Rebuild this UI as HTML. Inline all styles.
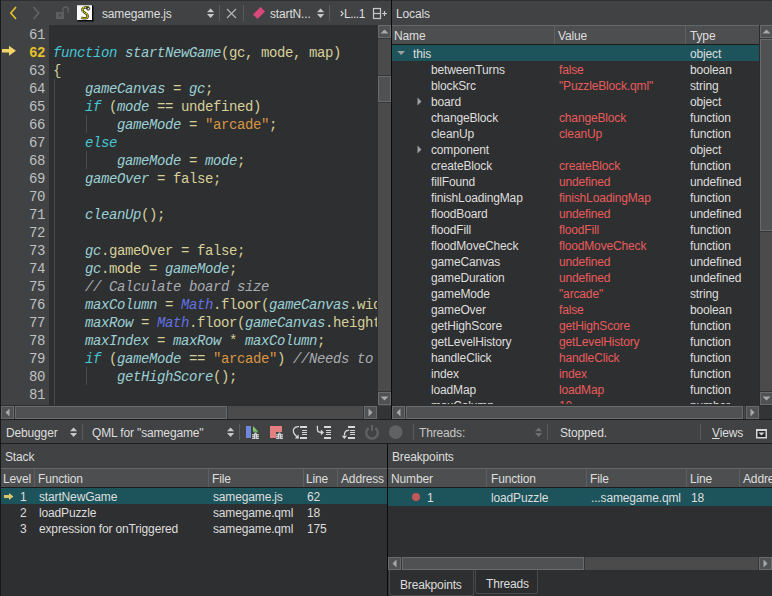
<!DOCTYPE html><html><head><meta charset="utf-8"><style>
*{margin:0;padding:0;box-sizing:border-box}
html,body{width:772px;height:596px;overflow:hidden;background:#404244;font-family:"Liberation Sans",sans-serif;font-size:12px;color:#d4d4d4}
.a{position:absolute}
.mono{font-family:"Liberation Mono",monospace;font-size:14px;letter-spacing:-0.4015px}
.tx{position:absolute;white-space:pre;line-height:16px;height:17px;padding-top:1px;letter-spacing:-0.15px}
.ln{position:absolute;left:53px;height:18px;line-height:18px;white-space:pre;color:#d6cf9a}
.n{position:absolute;left:1px;width:44px;height:18px;line-height:18px;text-align:right;color:#bec0c1}
.kw{color:#45c6d6;font-style:italic}
.id{color:#9acfd5;font-style:italic}
.st{color:#d69545}
.ty{color:#6272e4;font-style:italic}
.cm{color:#a8abb0;font-style:italic}
.red{color:#e05a5a}
</style></head><body>
<div class="a" style="left:0px;top:0px;width:772px;height:1px;background:#2f3031;"></div>
<div class="a" style="left:49px;top:25px;width:329px;height:381px;background:#2e2f30;"></div>
<div class="a" style="left:54px;top:79px;width:1px;height:327px;background:#4a4b4c;"></div>
<div class="a" style="left:86px;top:115px;width:1px;height:18px;background:#4a4b4c;"></div>
<div class="a" style="left:86px;top:151px;width:1px;height:18px;background:#4a4b4c;"></div>
<div class="a" style="left:86px;top:367px;width:1px;height:18px;background:#4a4b4c;"></div>
<div class="a mono" style="left:0;top:0;width:377px;height:405px;overflow:hidden">
<div class="n" style="top:26px">61</div>
<div class="ln" style="top:26px"></div>
<div class="n" style="top:44px;color:#e6c229;font-weight:bold">62</div>
<div class="ln" style="top:44px"><span class="kw">function</span> <span class="id">startNewGame</span>(gc, mode, map)</div>
<div class="n" style="top:62px">63</div>
<div class="ln" style="top:62px">{</div>
<div class="n" style="top:80px">64</div>
<div class="ln" style="top:80px">    <span class="id">gameCanvas</span> = <span class="id">gc</span>;</div>
<div class="n" style="top:98px">65</div>
<div class="ln" style="top:98px">    <span class="kw">if</span> (<span class="id">mode</span> == undefined)</div>
<div class="n" style="top:116px">66</div>
<div class="ln" style="top:116px">        <span class="id">gameMode</span> = <span class="st">"arcade"</span>;</div>
<div class="n" style="top:134px">67</div>
<div class="ln" style="top:134px">    <span class="kw">else</span></div>
<div class="n" style="top:152px">68</div>
<div class="ln" style="top:152px">        <span class="id">gameMode</span> = <span class="id">mode</span>;</div>
<div class="n" style="top:170px">69</div>
<div class="ln" style="top:170px">    <span class="id">gameOver</span> = false;</div>
<div class="n" style="top:188px">70</div>
<div class="ln" style="top:188px"></div>
<div class="n" style="top:206px">71</div>
<div class="ln" style="top:206px">    <span class="id">cleanUp</span>();</div>
<div class="n" style="top:224px">72</div>
<div class="ln" style="top:224px"></div>
<div class="n" style="top:242px">73</div>
<div class="ln" style="top:242px">    <span class="id">gc</span>.gameOver = false;</div>
<div class="n" style="top:260px">74</div>
<div class="ln" style="top:260px">    <span class="id">gc</span>.mode = <span class="id">gameMode</span>;</div>
<div class="n" style="top:278px">75</div>
<div class="ln" style="top:278px">    <span class="cm">// Calculate board size</span></div>
<div class="n" style="top:296px">76</div>
<div class="ln" style="top:296px">    <span class="id">maxColumn</span> = <span class="ty">Math</span>.floor(<span class="id">gameCanvas</span>.width/gameBlockSize);</div>
<div class="n" style="top:314px">77</div>
<div class="ln" style="top:314px">    <span class="id">maxRow</span> = <span class="ty">Math</span>.floor(<span class="id">gameCanvas</span>.height/gameBlockSize);</div>
<div class="n" style="top:332px">78</div>
<div class="ln" style="top:332px">    <span class="id">maxIndex</span> = <span class="id">maxRow</span> * <span class="id">maxColumn</span>;</div>
<div class="n" style="top:350px">79</div>
<div class="ln" style="top:350px">    <span class="kw">if</span> (<span class="id">gameMode</span> == <span class="st">"arcade"</span>) <span class="cm">//Needs to be after board sizing</span></div>
<div class="n" style="top:368px">80</div>
<div class="ln" style="top:368px">        <span class="id">getHighScore</span>();</div>
<div class="n" style="top:386px">81</div>
<div class="ln" style="top:386px"></div>
</div>
<svg class="a" style="left:1px;top:45px" width="17" height="12" viewBox="0 0 17 12"><path d="M1 4 H8 V0.8 L15 5.8 L8 10.8 V7.6 H1Z" fill="#f0d46a"/></svg>
<svg class="a" style="left:9px;top:6px" width="9" height="14" viewBox="0 0 9 14"><path d="M7 1 L1.8 7 L7 13" fill="none" stroke="#e8c42a" stroke-width="1.6"/></svg>
<svg class="a" style="left:32px;top:6px" width="9" height="14" viewBox="0 0 9 14"><path d="M1.5 1 L6.7 7 L1.5 13" fill="none" stroke="#626364" stroke-width="1.6"/></svg>
<svg class="a" style="left:54px;top:5px" width="16" height="16" viewBox="0 0 16 16"><rect x="2" y="7" width="8" height="7" fill="#5d5e5f"/><rect x="5" y="9.5" width="2" height="2" fill="#404244"/><path d="M9 7.2 V4.6 A2.6 2.6 0 0 1 14.2 4.6 V7.8" fill="none" stroke="#5d5e5f" stroke-width="1.4"/></svg>
<svg class="a" style="left:77px;top:5px" width="17" height="17" viewBox="0 0 17 17"><rect x="0" y="0" width="15" height="15" fill="#fbfbfb"/><rect x="0" y="0" width="15" height="0.6" fill="#aaa"/><rect x="15" y="0.5" width="1.5" height="16" fill="#0a0a0a"/><rect x="0.5" y="15" width="16" height="1.5" fill="#0a0a0a"/><path d="M11.5 2.6 C8.5 1.6 5.2 2.6 5.4 5.2 C5.6 7.6 10.6 8 10.7 11 C10.8 13.6 7.2 13.8 4.2 12.6" fill="none" stroke="#222" stroke-width="2.4"/><path d="M11.5 2.6 C8.5 1.6 5.2 2.6 5.4 5.2 C5.6 7.6 10.6 8 10.7 11 C10.8 13.6 7.2 13.8 4.2 12.6" fill="none" stroke="#f4e80a" stroke-width="1.3" stroke-dasharray="1.4 0.6"/><circle cx="11.2" cy="3.6" r="1.5" fill="none" stroke="#111" stroke-width="1"/></svg>
<div class="tx" style="left:102px;top:5px;color:#dedede">samegame.js</div>
<svg class="a" style="left:207px;top:8px" width="8" height="11" viewBox="0 0 8 11"><path d="M0 4.2 L3.6 0.4 L7.2 4.2Z M0 6 L7.2 6 L3.6 9.9Z" fill="#c8c8c8"/></svg>
<div class="a" style="left:219px;top:5px;width:1px;height:16px;background:#5a5b5c;"></div>
<svg class="a" style="left:226px;top:8px" width="11" height="11" viewBox="0 0 11 11"><path d="M1 1 L10 10 M10 1 L1 10" stroke="#b4b4b4" stroke-width="1.2"/></svg>
<div class="a" style="left:243px;top:5px;width:1px;height:16px;background:#5a5b5c;"></div>
<svg class="a" style="left:252px;top:6px" width="14" height="14" viewBox="0 0 14 14"><path d="M8.5 1 L13 5.5 L5.5 13 L1 8.5Z" fill="#d8487a"/></svg>
<div class="tx" style="left:270px;top:5px;color:#dedede">startN...</div>
<svg class="a" style="left:317px;top:8px" width="8" height="11" viewBox="0 0 8 11"><path d="M0 4.2 L3.6 0.4 L7.2 4.2Z M0 6 L7.2 6 L3.6 9.9Z" fill="#c8c8c8"/></svg>
<div class="a" style="left:329px;top:5px;width:1px;height:16px;background:#5a5b5c;"></div>
<svg class="a" style="left:340px;top:10px" width="5" height="7" viewBox="0 0 5 7"><path d="M0.8 1 L3.2 3.5 L0.8 6" fill="none" stroke="#d0d0d0" stroke-width="1.1"/></svg>
<div class="tx" style="left:344px;top:5px;color:#dedede;letter-spacing:-0.5px">L...1</div>
<svg class="a" style="left:372px;top:7px" width="16" height="13" viewBox="0 0 16 13"><rect x="1.5" y="1.5" width="7" height="10" fill="none" stroke="#c8c8c8" stroke-width="1.2"/><path d="M1.5 6.5 H8.5" stroke="#c8c8c8" stroke-width="1.2"/><path d="M10 6.5 H15 M12.5 4 V9" stroke="#c8c8c8" stroke-width="1.2"/></svg>
<div class="a" style="left:378px;top:25px;width:13px;height:380px;background:#4b4b4c;"></div>
<div class="a" style="left:378px;top:25px;width:13px;height:13px;background:#505152;border:1px solid #6a6b6c"></div>
<svg class="a" style="left:378px;top:25px" width="13" height="13" viewBox="0 0 13 13"><path d="M2.5 8.5 L6.5 4.5 L10.5 8.5Z" fill="#a8a8a8"/></svg>
<div class="a" style="left:378px;top:38px;width:13px;height:1px;background:#353637;"></div>
<div class="a" style="left:378px;top:392px;width:13px;height:13px;background:#505152;border:1px solid #6a6b6c"></div>
<svg class="a" style="left:378px;top:392px" width="13" height="13" viewBox="0 0 13 13"><path d="M2.5 4.5 L10.5 4.5 L6.5 8.5Z" fill="#a8a8a8"/></svg>
<div class="a" style="left:378px;top:391px;width:13px;height:1px;background:#353637;"></div>
<div class="a" style="left:378px;top:75px;width:13px;height:1px;background:#353637;"></div>
<div class="a" style="left:378px;top:76px;width:13px;height:26px;background:#505152;border:1px solid #6a6b6c"></div>
<div class="a" style="left:378px;top:102px;width:13px;height:1px;background:#353637;"></div>
<div class="a" style="left:1px;top:405px;width:377px;height:1px;background:#2e2f30;"></div>
<div class="a" style="left:1px;top:406px;width:376px;height:13px;background:#4b4b4c;"></div>
<div class="a" style="left:1px;top:406px;width:13px;height:13px;background:#505152;border:1px solid #6a6b6c"></div>
<svg class="a" style="left:1px;top:406px" width="13" height="13" viewBox="0 0 13 13"><path d="M8.5 2.5 L4.5 6.5 L8.5 10.5Z" fill="#a8a8a8"/></svg>
<div class="a" style="left:14px;top:406px;width:1px;height:13px;background:#353637;"></div>
<div class="a" style="left:364px;top:406px;width:13px;height:13px;background:#505152;border:1px solid #6a6b6c"></div>
<svg class="a" style="left:364px;top:406px" width="13" height="13" viewBox="0 0 13 13"><path d="M4.5 2.5 L8.5 6.5 L4.5 10.5Z" fill="#a8a8a8"/></svg>
<div class="a" style="left:363px;top:406px;width:1px;height:13px;background:#353637;"></div>
<div class="a" style="left:14px;top:406px;width:1px;height:13px;background:#353637;"></div>
<div class="a" style="left:15px;top:406px;width:212px;height:13px;background:#505152;border:1px solid #6a6b6c"></div>
<div class="a" style="left:227px;top:406px;width:1px;height:13px;background:#353637;"></div>
<div class="a" style="left:377px;top:406px;width:14px;height:13px;background:#333435;"></div>
<div class="a" style="left:391px;top:0px;width:1px;height:420px;background:#0c0c0c;"></div>
<div class="a" style="left:392px;top:25px;width:380px;height:381px;background:#2e2f30;"></div>
<div class="tx" style="left:396px;top:5px;color:#dedede">Locals</div>
<div class="a" style="left:392px;top:25px;width:367px;height:1px;background:#656667;"></div>
<div class="a" style="left:392px;top:26px;width:367px;height:18px;background:#4d4e4f;"></div>
<div class="a" style="left:392px;top:44px;width:367px;height:1px;background:#1c1c1c;"></div>
<div class="tx" style="left:394px;top:27px;color:#dedede">Name</div>
<div class="a" style="left:554px;top:26px;width:1px;height:18px;background:#5e5f60;"></div>
<div class="tx" style="left:558px;top:27px;color:#dedede">Value</div>
<div class="a" style="left:685px;top:26px;width:1px;height:18px;background:#5e5f60;"></div>
<div class="tx" style="left:690px;top:27px;color:#dedede">Type</div>
<div class="a" style="left:392px;top:45px;width:367px;height:16px;background:#1d545c;"></div>
<div class="a" style="left:392px;top:45px;width:367px;height:359px;overflow:hidden">
<svg class="a" style="left:5px;top:5px" width="9" height="7" viewBox="0 0 9 7"><path d="M0.3 1 L8 1 L4.15 5Z" fill="#a0a0a0"/></svg>
<div class="tx" style="left:21px;top:0px;color:#dedede">this</div>
<div class="tx" style="left:298px;top:0px;color:#dedede">object</div>
<div class="tx" style="left:39px;top:16px;color:#dedede">betweenTurns</div>
<div class="tx" style="left:167px;top:16px;color:#e85c5c">false</div>
<div class="tx" style="left:298px;top:16px;color:#dedede">boolean</div>
<div class="tx" style="left:39px;top:32px;color:#dedede">blockSrc</div>
<div class="tx" style="left:167px;top:32px;color:#e85c5c">&quot;PuzzleBlock.qml&quot;</div>
<div class="tx" style="left:298px;top:32px;color:#dedede">string</div>
<svg class="a" style="left:25px;top:52px" width="6" height="9" viewBox="0 0 6 9"><path d="M0.5 0.5 L4.5 4.5 L0.5 8.5Z" fill="#a0a0a0"/></svg>
<div class="tx" style="left:39px;top:48px;color:#dedede">board</div>
<div class="tx" style="left:298px;top:48px;color:#dedede">object</div>
<div class="tx" style="left:39px;top:64px;color:#dedede">changeBlock</div>
<div class="tx" style="left:167px;top:64px;color:#e85c5c">changeBlock</div>
<div class="tx" style="left:298px;top:64px;color:#dedede">function</div>
<div class="tx" style="left:39px;top:80px;color:#dedede">cleanUp</div>
<div class="tx" style="left:167px;top:80px;color:#e85c5c">cleanUp</div>
<div class="tx" style="left:298px;top:80px;color:#dedede">function</div>
<svg class="a" style="left:25px;top:100px" width="6" height="9" viewBox="0 0 6 9"><path d="M0.5 0.5 L4.5 4.5 L0.5 8.5Z" fill="#a0a0a0"/></svg>
<div class="tx" style="left:39px;top:96px;color:#dedede">component</div>
<div class="tx" style="left:298px;top:96px;color:#dedede">object</div>
<div class="tx" style="left:39px;top:112px;color:#dedede">createBlock</div>
<div class="tx" style="left:167px;top:112px;color:#e85c5c">createBlock</div>
<div class="tx" style="left:298px;top:112px;color:#dedede">function</div>
<div class="tx" style="left:39px;top:128px;color:#dedede">fillFound</div>
<div class="tx" style="left:167px;top:128px;color:#e85c5c">undefined</div>
<div class="tx" style="left:298px;top:128px;color:#dedede">undefined</div>
<div class="tx" style="left:39px;top:144px;color:#dedede">finishLoadingMap</div>
<div class="tx" style="left:167px;top:144px;color:#e85c5c">finishLoadingMap</div>
<div class="tx" style="left:298px;top:144px;color:#dedede">function</div>
<div class="tx" style="left:39px;top:160px;color:#dedede">floodBoard</div>
<div class="tx" style="left:167px;top:160px;color:#e85c5c">undefined</div>
<div class="tx" style="left:298px;top:160px;color:#dedede">undefined</div>
<div class="tx" style="left:39px;top:176px;color:#dedede">floodFill</div>
<div class="tx" style="left:167px;top:176px;color:#e85c5c">floodFill</div>
<div class="tx" style="left:298px;top:176px;color:#dedede">function</div>
<div class="tx" style="left:39px;top:192px;color:#dedede">floodMoveCheck</div>
<div class="tx" style="left:167px;top:192px;color:#e85c5c">floodMoveCheck</div>
<div class="tx" style="left:298px;top:192px;color:#dedede">function</div>
<div class="tx" style="left:39px;top:208px;color:#dedede">gameCanvas</div>
<div class="tx" style="left:167px;top:208px;color:#e85c5c">undefined</div>
<div class="tx" style="left:298px;top:208px;color:#dedede">undefined</div>
<div class="tx" style="left:39px;top:224px;color:#dedede">gameDuration</div>
<div class="tx" style="left:167px;top:224px;color:#e85c5c">undefined</div>
<div class="tx" style="left:298px;top:224px;color:#dedede">undefined</div>
<div class="tx" style="left:39px;top:240px;color:#dedede">gameMode</div>
<div class="tx" style="left:167px;top:240px;color:#e85c5c">&quot;arcade&quot;</div>
<div class="tx" style="left:298px;top:240px;color:#dedede">string</div>
<div class="tx" style="left:39px;top:256px;color:#dedede">gameOver</div>
<div class="tx" style="left:167px;top:256px;color:#e85c5c">false</div>
<div class="tx" style="left:298px;top:256px;color:#dedede">boolean</div>
<div class="tx" style="left:39px;top:272px;color:#dedede">getHighScore</div>
<div class="tx" style="left:167px;top:272px;color:#e85c5c">getHighScore</div>
<div class="tx" style="left:298px;top:272px;color:#dedede">function</div>
<div class="tx" style="left:39px;top:288px;color:#dedede">getLevelHistory</div>
<div class="tx" style="left:167px;top:288px;color:#e85c5c">getLevelHistory</div>
<div class="tx" style="left:298px;top:288px;color:#dedede">function</div>
<div class="tx" style="left:39px;top:304px;color:#dedede">handleClick</div>
<div class="tx" style="left:167px;top:304px;color:#e85c5c">handleClick</div>
<div class="tx" style="left:298px;top:304px;color:#dedede">function</div>
<div class="tx" style="left:39px;top:320px;color:#dedede">index</div>
<div class="tx" style="left:167px;top:320px;color:#e85c5c">index</div>
<div class="tx" style="left:298px;top:320px;color:#dedede">function</div>
<div class="tx" style="left:39px;top:336px;color:#dedede">loadMap</div>
<div class="tx" style="left:167px;top:336px;color:#e85c5c">loadMap</div>
<div class="tx" style="left:298px;top:336px;color:#dedede">function</div>
<div class="tx" style="left:39px;top:352px;color:#dedede">maxColumn</div>
<div class="tx" style="left:167px;top:352px;color:#e85c5c">10</div>
<div class="tx" style="left:298px;top:352px;color:#dedede">number</div>
</div>
<div class="a" style="left:759px;top:25px;width:1px;height:381px;background:#2a2b2c;"></div>
<div class="a" style="left:760px;top:25px;width:13px;height:380px;background:#4b4b4c;"></div>
<div class="a" style="left:760px;top:25px;width:13px;height:13px;background:#505152;border:1px solid #6a6b6c"></div>
<svg class="a" style="left:760px;top:25px" width="13" height="13" viewBox="0 0 13 13"><path d="M2.5 8.5 L6.5 4.5 L10.5 8.5Z" fill="#a8a8a8"/></svg>
<div class="a" style="left:760px;top:38px;width:13px;height:1px;background:#353637;"></div>
<div class="a" style="left:760px;top:392px;width:13px;height:13px;background:#505152;border:1px solid #6a6b6c"></div>
<svg class="a" style="left:760px;top:392px" width="13" height="13" viewBox="0 0 13 13"><path d="M2.5 4.5 L10.5 4.5 L6.5 8.5Z" fill="#a8a8a8"/></svg>
<div class="a" style="left:760px;top:391px;width:13px;height:1px;background:#353637;"></div>
<div class="a" style="left:760px;top:38px;width:13px;height:1px;background:#353637;"></div>
<div class="a" style="left:760px;top:39px;width:13px;height:192px;background:#505152;border:1px solid #6a6b6c"></div>
<div class="a" style="left:760px;top:231px;width:13px;height:1px;background:#353637;"></div>
<div class="a" style="left:392px;top:406px;width:367px;height:13px;background:#4b4b4c;"></div>
<div class="a" style="left:392px;top:406px;width:13px;height:13px;background:#505152;border:1px solid #6a6b6c"></div>
<svg class="a" style="left:392px;top:406px" width="13" height="13" viewBox="0 0 13 13"><path d="M8.5 2.5 L4.5 6.5 L8.5 10.5Z" fill="#a8a8a8"/></svg>
<div class="a" style="left:405px;top:406px;width:1px;height:13px;background:#353637;"></div>
<div class="a" style="left:746px;top:406px;width:13px;height:13px;background:#505152;border:1px solid #6a6b6c"></div>
<svg class="a" style="left:746px;top:406px" width="13" height="13" viewBox="0 0 13 13"><path d="M4.5 2.5 L8.5 6.5 L4.5 10.5Z" fill="#a8a8a8"/></svg>
<div class="a" style="left:745px;top:406px;width:1px;height:13px;background:#353637;"></div>
<div class="a" style="left:405px;top:406px;width:1px;height:13px;background:#353637;"></div>
<div class="a" style="left:406px;top:406px;width:337px;height:13px;background:#505152;border:1px solid #6a6b6c"></div>
<div class="a" style="left:743px;top:406px;width:1px;height:13px;background:#353637;"></div>
<div class="a" style="left:759px;top:406px;width:13px;height:13px;background:#333435;"></div>
<div class="a" style="left:0px;top:419px;width:772px;height:1px;background:#1e1e1e;"></div>
<div class="a" style="left:0px;top:443px;width:772px;height:1px;background:#1e1e1e;"></div>
<div class="tx" style="left:6px;top:424px;color:#dedede">Debugger</div>
<svg class="a" style="left:70px;top:427px" width="8" height="11" viewBox="0 0 8 11"><path d="M0 4.2 L3.6 0.4 L7.2 4.2Z M0 6 L7.2 6 L3.6 9.9Z" fill="#c8c8c8"/></svg>
<div class="a" style="left:82px;top:424px;width:1px;height:16px;background:#5a5b5c;"></div>
<div class="tx" style="left:92px;top:424px;color:#dedede">QML for &quot;samegame&quot;</div>
<svg class="a" style="left:227px;top:427px" width="8" height="11" viewBox="0 0 8 11"><path d="M0 4.2 L3.6 0.4 L7.2 4.2Z M0 6 L7.2 6 L3.6 9.9Z" fill="#c8c8c8"/></svg>
<div class="a" style="left:239px;top:424px;width:1px;height:16px;background:#5a5b5c;"></div>
<svg class="a" style="left:242px;top:422px" width="20" height="20" viewBox="0 0 20 20"><rect x="4" y="4" width="5" height="12" fill="#7088dc"/><path d="M11 4 L17 10.5 L11 10.5Z" fill="#7cc864"/><rect x="9.5" y="9.5" width="8" height="8" fill="#2e2f30" opacity="0.5"/><g transform="translate(10,10)"><ellipse cx="3.5" cy="1.6" rx="1.3" ry="1.1" fill="#d4d4d4"/><rect x="0" y="2.2" width="7" height="1.2" fill="#d4d4d4"/><rect x="0" y="4.1" width="7" height="1.2" fill="#d4d4d4"/><rect x="0" y="6" width="7" height="1" fill="#d4d4d4"/><rect x="1.8" y="2" width="3.4" height="5" fill="#d4d4d4"/><rect x="3.2" y="2.6" width="0.6" height="4.4" fill="#707070"/></g></svg>
<svg class="a" style="left:266px;top:422px" width="20" height="20" viewBox="0 0 20 20"><path d="M4 4 H16 V10 H10 V16 H4Z" fill="#e58080"/><g transform="translate(10,10)"><ellipse cx="3.5" cy="1.6" rx="1.3" ry="1.1" fill="#d4d4d4"/><rect x="0" y="2.2" width="7" height="1.2" fill="#d4d4d4"/><rect x="0" y="4.1" width="7" height="1.2" fill="#d4d4d4"/><rect x="0" y="6" width="7" height="1" fill="#d4d4d4"/><rect x="1.8" y="2" width="3.4" height="5" fill="#d4d4d4"/><rect x="3.2" y="2.6" width="0.6" height="4.4" fill="#707070"/></g></svg>
<svg class="a" style="left:290px;top:422px" width="20" height="20" viewBox="0 0 20 20"><g fill="#d8d8d8"><rect x="10" y="4" width="7" height="2"/><rect x="12" y="8" width="5" height="1"/><rect x="12" y="10" width="5" height="1"/><rect x="12" y="12" width="5" height="1"/><rect x="10" y="15" width="7" height="2"/></g><path d="M9 4.6 C4 4.2 2.6 8 3.6 10.5 C4.3 12.3 5.3 13.6 6.8 14.6" fill="none" stroke="#d8d8d8" stroke-width="1.3"/><path d="M4.8 16.4 L9 16.6 L8.4 12.6Z" fill="#d8d8d8"/></svg>
<svg class="a" style="left:314px;top:422px" width="20" height="20" viewBox="0 0 20 20"><g fill="#d8d8d8"><rect x="10" y="4" width="7" height="2"/><rect x="12" y="8" width="5" height="1"/><rect x="12" y="10" width="5" height="1"/><rect x="12" y="12" width="5" height="1"/><rect x="10" y="15" width="7" height="2"/></g><path d="M3.4 3.8 V7.5 C3.4 9.5 4.6 10.4 7.2 10.4" fill="none" stroke="#d8d8d8" stroke-width="1.3"/><path d="M6.8 7.6 L10 10.4 L6.8 13.2Z" fill="#d8d8d8"/></svg>
<svg class="a" style="left:338px;top:422px" width="20" height="20" viewBox="0 0 20 20"><g fill="#d8d8d8"><rect x="10" y="4" width="7" height="2"/><rect x="12" y="8" width="5" height="1"/><rect x="12" y="10" width="5" height="1"/><rect x="12" y="12" width="5" height="1"/><rect x="10" y="15" width="7" height="2"/></g><path d="M11 8.4 C7.5 8.2 6.4 10 6.4 13.5" fill="none" stroke="#d8d8d8" stroke-width="1.3"/><path d="M3.8 13.8 L9 13.8 L6.4 17Z" fill="#d8d8d8"/></svg>
<svg class="a" style="left:362px;top:422px" width="20" height="20" viewBox="0 0 20 20"><path d="M6.6 6 A5.8 5.8 0 1 0 13.4 6" fill="none" stroke="#606162" stroke-width="2.4"/><rect x="9" y="3" width="2" height="6" fill="#606162"/></svg>
<svg class="a" style="left:384px;top:422px" width="20" height="20" viewBox="0 0 20 20"><circle cx="11.7" cy="10.1" r="6.9" fill="#606162"/></svg>
<div class="a" style="left:413px;top:424px;width:1px;height:16px;background:#5a5b5c;"></div>
<div class="tx" style="left:419px;top:424px;color:#c6c6c6">Threads:</div>
<svg class="a" style="left:535px;top:427px" width="8" height="11" viewBox="0 0 8 11"><path d="M0 4.2 L3.6 0.4 L7.2 4.2Z M0 6 L7.2 6 L3.6 9.9Z" fill="#6e6e6e"/></svg>
<div class="a" style="left:547px;top:424px;width:1px;height:16px;background:#5a5b5c;"></div>
<div class="tx" style="left:560px;top:424px;color:#dedede">Stopped.</div>
<div class="a" style="left:700px;top:424px;width:1px;height:16px;background:#5a5b5c;"></div>
<div class="tx" style="left:712px;top:424px;color:#dedede"><u>V</u>iews</div>
<svg class="a" style="left:755px;top:428px" width="13" height="11" viewBox="0 0 13 11"><rect x="1" y="1" width="11" height="9.5" fill="#d6d6d6"/><rect x="2.5" y="3" width="8" height="6" fill="#262728"/><path d="M3.5 4.6 L9.5 4.6 L6.5 7.6Z" fill="#d6d6d6"/></svg>
<div class="a" style="left:1px;top:468px;width:386px;height:128px;background:#2e2f30;"></div>
<div class="tx" style="left:5px;top:448px;color:#dedede">Stack</div>
<div class="a" style="left:1px;top:468px;width:386px;height:1px;background:#656667;"></div>
<div class="a" style="left:1px;top:469px;width:386px;height:18px;background:#4d4e4f;"></div>
<div class="a" style="left:1px;top:487px;width:386px;height:1px;background:#1c1c1c;"></div>
<div class="tx" style="left:3px;top:470px;color:#dedede">Level</div>
<div class="a" style="left:34px;top:469px;width:1px;height:18px;background:#5e5f60;"></div>
<div class="tx" style="left:38px;top:470px;color:#dedede">Function</div>
<div class="a" style="left:208px;top:469px;width:1px;height:18px;background:#5e5f60;"></div>
<div class="tx" style="left:212px;top:470px;color:#dedede">File</div>
<div class="a" style="left:303px;top:469px;width:1px;height:18px;background:#5e5f60;"></div>
<div class="tx" style="left:306px;top:470px;color:#dedede">Line</div>
<div class="a" style="left:337px;top:469px;width:1px;height:18px;background:#5e5f60;"></div>
<div class="tx" style="left:341px;top:470px;color:#dedede">Address</div>
<div class="a" style="left:1px;top:488px;width:386px;height:16px;background:#1d545c;"></div>
<svg class="a" style="left:4px;top:493px" width="10" height="7" viewBox="0 0 10 7"><path d="M0 2 H5 V0 L9.5 3.5 L5 7 V5 H0Z" fill="#d8c46c"/></svg>
<div class="tx" style="left:20px;top:488px;color:#dedede">1</div>
<div class="tx" style="left:39px;top:488px;color:#dedede">startNewGame</div>
<div class="tx" style="left:213px;top:488px;color:#dedede">samegame.js</div>
<div class="tx" style="left:307px;top:488px;color:#dedede">62</div>
<div class="tx" style="left:20px;top:504px;color:#dedede">2</div>
<div class="tx" style="left:39px;top:504px;color:#dedede">loadPuzzle</div>
<div class="tx" style="left:213px;top:504px;color:#dedede">samegame.qml</div>
<div class="tx" style="left:307px;top:504px;color:#dedede">18</div>
<div class="tx" style="left:20px;top:520px;color:#dedede">3</div>
<div class="tx" style="left:39px;top:520px;color:#dedede">expression for onTriggered</div>
<div class="tx" style="left:213px;top:520px;color:#dedede">samegame.qml</div>
<div class="tx" style="left:307px;top:520px;color:#dedede">175</div>
<div class="a" style="left:387px;top:444px;width:1px;height:152px;background:#0c0c0c;"></div>
<div class="a" style="left:388px;top:468px;width:384px;height:128px;background:#2e2f30;"></div>
<div class="tx" style="left:392px;top:448px;color:#dedede">Breakpoints</div>
<div class="a" style="left:388px;top:468px;width:384px;height:1px;background:#656667;"></div>
<div class="a" style="left:388px;top:469px;width:384px;height:18px;background:#4d4e4f;"></div>
<div class="a" style="left:388px;top:487px;width:384px;height:1px;background:#1c1c1c;"></div>
<div class="tx" style="left:391px;top:470px;color:#dedede">Number</div>
<div class="a" style="left:486px;top:469px;width:1px;height:18px;background:#5e5f60;"></div>
<div class="tx" style="left:491px;top:470px;color:#dedede">Function</div>
<div class="a" style="left:586px;top:469px;width:1px;height:18px;background:#5e5f60;"></div>
<div class="tx" style="left:590px;top:470px;color:#dedede">File</div>
<div class="a" style="left:686px;top:469px;width:1px;height:18px;background:#5e5f60;"></div>
<div class="tx" style="left:690px;top:470px;color:#dedede">Line</div>
<div class="a" style="left:739px;top:469px;width:1px;height:18px;background:#5e5f60;"></div>
<div class="tx" style="left:743px;top:470px;color:#dedede">Address</div>
<div class="a" style="left:388px;top:488px;width:384px;height:18px;background:#1d545c"></div>
<svg class="a" style="left:411px;top:492px" width="10" height="10" viewBox="0 0 10 10"><circle cx="5" cy="5" r="4" fill="#c05858"/></svg>
<div class="tx" style="left:427px;top:489px;color:#dedede">1</div>
<div class="tx" style="left:491px;top:489px;color:#dedede">loadPuzzle</div>
<div class="tx" style="left:591px;top:489px;color:#dedede">...samegame.qml</div>
<div class="tx" style="left:691px;top:489px;color:#dedede">18</div>
<div class="a" style="left:388px;top:557px;width:384px;height:13px;background:#4b4b4c;"></div>
<div class="a" style="left:388px;top:557px;width:13px;height:13px;background:#505152;border:1px solid #6a6b6c"></div>
<svg class="a" style="left:388px;top:557px" width="13" height="13" viewBox="0 0 13 13"><path d="M8.5 2.5 L4.5 6.5 L8.5 10.5Z" fill="#a8a8a8"/></svg>
<div class="a" style="left:401px;top:557px;width:1px;height:13px;background:#353637;"></div>
<div class="a" style="left:759px;top:557px;width:13px;height:13px;background:#505152;border:1px solid #6a6b6c"></div>
<svg class="a" style="left:759px;top:557px" width="13" height="13" viewBox="0 0 13 13"><path d="M4.5 2.5 L8.5 6.5 L4.5 10.5Z" fill="#a8a8a8"/></svg>
<div class="a" style="left:758px;top:557px;width:1px;height:13px;background:#353637;"></div>
<div class="a" style="left:401px;top:557px;width:1px;height:13px;background:#353637;"></div>
<div class="a" style="left:402px;top:557px;width:182px;height:13px;background:#505152;border:1px solid #6a6b6c"></div>
<div class="a" style="left:584px;top:557px;width:1px;height:13px;background:#353637;"></div>
<div class="a" style="left:388px;top:570px;width:384px;height:26px;background:#2e2f30;"></div>
<div class="a" style="left:389px;top:570px;width:85px;height:26px;border:1px solid #48494a;border-top:none;border-radius:0 0 3px 3px;background:#2e2f30"></div>
<div class="a" style="left:475px;top:570px;width:63px;height:24px;border:1px solid #48494a;border-top:none;border-radius:0 0 3px 3px;background:#2b2c2d"></div>
<div class="tx" style="left:400px;top:576px;color:#dedede">Breakpoints</div>
<div class="tx" style="left:486px;top:575px;color:#dedede">Threads</div>
<div class="a" style="left:0px;top:0px;width:1px;height:596px;background:#1a1a1a;"></div>
</body></html>
